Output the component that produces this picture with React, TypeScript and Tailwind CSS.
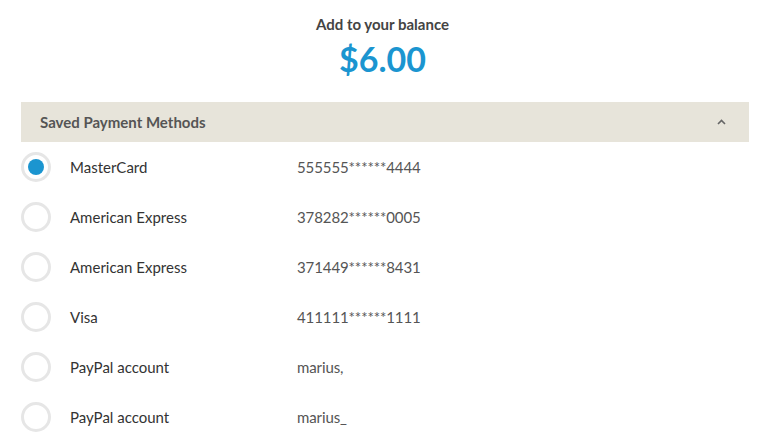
import React, { useState } from 'react';

interface Method {
  id: number;
  name: string;
  detail: string;
}

const METHODS: Method[] = [
  { id: 1, name: 'MasterCard', detail: '555555******4444' },
  { id: 2, name: 'American Express', detail: '378282******0005' },
  { id: 3, name: 'American Express', detail: '371449******8431' },
  { id: 4, name: 'Visa', detail: '411111******1111' },
  { id: 5, name: 'PayPal account', detail: 'marius,' },
  { id: 6, name: 'PayPal account', detail: 'marius_' },
];

const Radio: React.FC<{ checked: boolean }> = ({ checked }) => (
  <span className="flex h-[30px] w-[30px] items-center justify-center rounded-full border-[3px] border-[#e6e6e6] bg-white">
    {checked && <span className="h-[16px] w-[16px] rounded-full bg-[#1b95d0]" />}
  </span>
);

export default function App() {
  const [selected, setSelected] = useState(1);
  const [open, setOpen] = useState(true);

  return (
    <div className="h-[444px] w-[765px] overflow-hidden bg-white font-['Lato',sans-serif]">
      <div className="flex flex-col items-center pt-[14px]">
        <div className="text-[15px] font-bold leading-[20px] text-[#444]">Add to your balance</div>
        <div className="mt-[5px] text-[34px] font-bold leading-[40px] text-[#1b95d0]">$6.00</div>
      </div>

      <div className="mt-[23px] ml-[21px] w-[728px]">
        <button
          type="button"
          onClick={() => setOpen(!open)}
          className="flex h-[40px] w-full items-center justify-between bg-[#e7e4da] pl-[19px] pr-[23px] text-left"
        >
          <span className="text-[15px] font-bold text-[#555]">Saved Payment Methods</span>
          <svg width="9" height="6" viewBox="0 0 9 6" className={open ? '' : 'rotate-180'}>
            <path d="M1 5 L4.5 1.5 L8 5" fill="none" stroke="#666" strokeWidth="1.6" />
          </svg>
        </button>

        {open && (
          <div>
            {METHODS.map(m => (
              <label
                key={m.id}
                onClick={() => setSelected(m.id)}
                className="flex h-[50px] cursor-pointer items-center"
              >
                <span className="w-[49px]">
                  <Radio checked={selected === m.id} />
                </span>
                <span className="w-[227px] text-[15px] text-[#333]">{m.name}</span>
                <span className="text-[15px] tracking-[-0.1px] text-[#555]">{m.detail}</span>
              </label>
            ))}
          </div>
        )}
      </div>
    </div>
  );
}
